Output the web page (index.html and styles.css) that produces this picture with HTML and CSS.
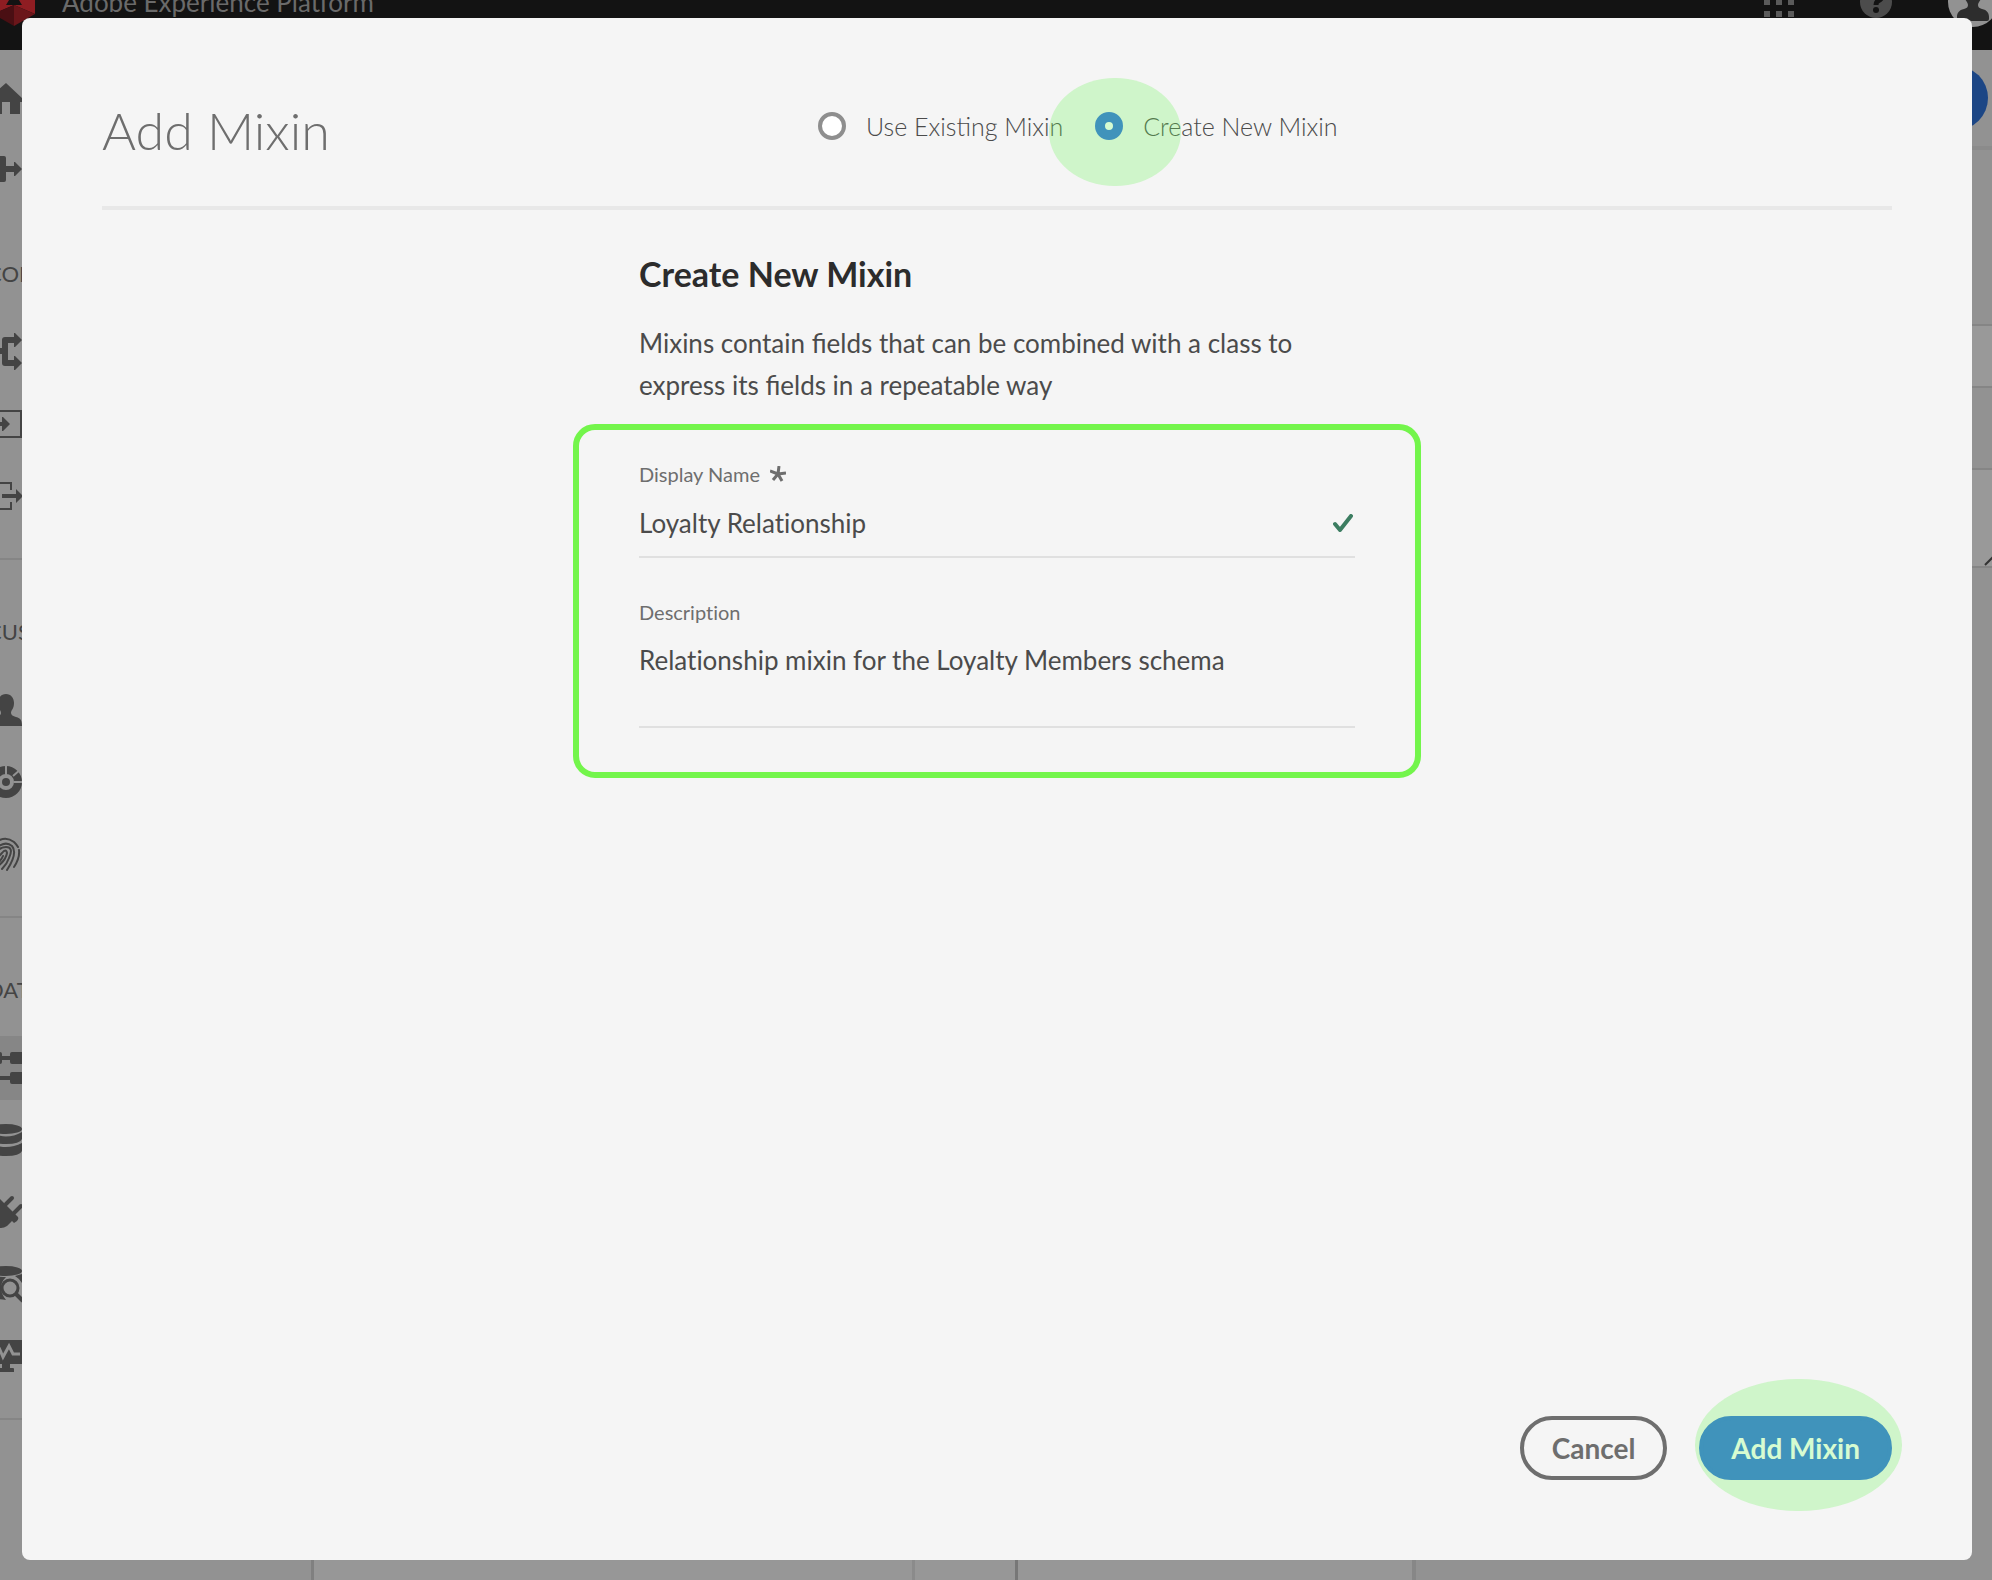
FILE: index.html
```html
<!DOCTYPE html>
<html lang="en">
<head>
<meta charset="utf-8">
<title>Add Mixin</title>
<link rel="stylesheet" href="styles.css">
</head>
<body>
<div class="app">
  <header class="topbar">
    <svg class="logo" viewBox="-7 -22 42 48" aria-hidden="true">
      <path d="M14-22 35-9V14L14 5-7 14V-9z" fill="#8f1d22"/>
      <path d="M14-8 22 5H6z" fill="#131313"/>
      <path d="M14 5V26L-7 14z" fill="#4a0f13"/>
      <path d="M14 5V26L35 14z" fill="#6b161a"/>
    </svg>
    <span class="brand">Adobe Experience Platform</span>
    <svg class="switcher" viewBox="0 0 30 30" fill="#5b5b5b" aria-hidden="true">
      <path d="M0 0h6v6H0zM12 0h6v6h-6zM24 0h6v6h-6zM0 12h6v6H0zM12 12h6v6h-6zM24 12h6v6h-6zM0 24h6v6H0zM12 24h6v6h-6zM24 24h6v6h-6z"/>
    </svg>
    <svg class="help" viewBox="-16 -16 32 32" aria-hidden="true">
      <circle r="16" fill="#4c4c4c"/>
      <path d="M-5-6Q-4-10 0-10 6-10 6-6 6-3 2-1 0 0 0 3" fill="none" stroke="#131313" stroke-width="5"/>
      <circle cy="8" r="3" fill="#131313"/>
    </svg>
    <svg class="avatar" viewBox="-25 -25 50 50" aria-hidden="true">
      <circle r="25" fill="#929292"/>
      <path d="M0-18c6 0 9 5 9 10 0 6-4 8-4 11 0 2 1 3 4 4 5 1 7 4 7 8v2q0 2-2 2h-28q-2 0-2-2v-2c0-4 2-7 7-8 3-1 4-2 4-4 0-3-4-5-4-11 0-5 3-10 9-10z" fill="#2d2d2d"/>
    </svg>
  </header>

  <div class="workspace">
    <nav class="sidebar">
      <div class="nav-group nav-group-first">
        <div class="nav-item"><svg class="nav-icon" viewBox="-14 -20 40 40"><path d="M6-15 23 1v3H20V16H10V4H2V16H-8V4H-12V1z"/></svg></div>
        <div class="nav-item"><svg class="nav-icon" viewBox="-14 -20 40 40"><path d="M-12-14H4q2 0 2 2v8h8v-4h1l7 7-7 7h-1V2H6v8q0 2-2 2H-12z"/></svg></div>
      </div>
      <div class="nav-group">
        <div class="nav-label">CON</div>
        <div class="nav-item"><svg class="nav-icon" viewBox="-14 -20 40 40"><path d="M-14-4H2V-12q0-3 3-3h9v-4h1l7 7-7 7h-1V-9H8V8h6V4h1l7 7-7 7h-1V14H5q-3 0-3-3V2H-14z"/></svg></div>
        <div class="nav-item"><svg class="nav-icon" viewBox="-14 -20 40 40"><path d="M-14-13H21V13H-14" fill="none" stroke="#444" stroke-width="2"/><path d="M-14-2H2v-5h1l7 7-7 7H2V2H-14z"/></svg></div>
        <div class="nav-item"><svg class="nav-icon" viewBox="-14 -20 40 40"><path d="M11-6V-13H-12V13H11V6" fill="none" stroke="#444" stroke-width="2"/><path d="M2-2H16v-5l7 7-7 7V2H2z"/></svg></div>
      </div>
      <div class="nav-group">
        <div class="nav-label">CUS</div>
        <div class="nav-item"><svg class="nav-icon" viewBox="-14 -20 40 40"><path d="M6-16c5 0 8 4 8 9 0 6-3 7-3 10 0 2 2 3 5 4 5 1 6 4 6 9h-32c0-5 1-8 6-9 3-1 5-2 5-4 0-3-3-4-3-10 0-5 3-9 8-9z"/></svg></div>
        <div class="nav-item"><svg class="nav-icon" viewBox="-14 -20 40 40"><circle cx="6" r="12" fill="none" stroke="#444" stroke-width="8"/><circle cx="6" r="4"/><path d="M6-17V-7M13-6 21-13M14 0H23M-1 6-8 13M-1-4-10-8" stroke="#929292" stroke-width="2"/></svg></div>
        <div class="nav-item"><svg class="nav-icon" viewBox="-14 -20 40 40"><g fill="none" stroke="#444" stroke-width="2" stroke-linecap="round"><path d="M-5-11Q5-19 14-12 17-9 18-7M19-4Q20 4 14 13M-5-5Q5-14 12-8 18-1 7 16M-4 0Q-1-7 6-7 14-7 9 4 7 10 2 15M-7 9Q0 1 2-1 6-6 7-1 6 6-3 13M3 2Q1 7-5 12"/></g></svg></div>
      </div>
      <div class="nav-group">
        <div class="nav-label">DAT</div>
        <div class="nav-item nav-item-active"><svg class="nav-icon" viewBox="-14 -20 40 40"><path d="M-10-16H0q2 0 2 2v2h8v-2q0-2 2-2H22V-4H12q-2 0-2-2V-8H2v2q0 2-2 2H-10zM-10 8H10V6q0-2 2-2H22V16H12q-2 0-2-2V12H-10z"/></svg></div>
        <div class="nav-item"><svg class="nav-icon" viewBox="-14 -20 40 40"><ellipse cx="6" cy="-11" rx="16" ry="5"/><path d="M-10-8Q6 1 22-8V-1Q20 4 6 4-8 4-10-1zM-10 3Q6 11 22 3V11Q20 16 6 16-8 16-10 11z"/></svg></div>
        <div class="nav-item"><svg class="nav-icon" viewBox="-14 -20 40 40"><path d="M0-13 18 5Q19 7 17 9L14 11 12 9 7 14Q1 18-5 14L-9 18H-14V12L-9 6Q-12-1-7-6z"/><path d="M6-8 12-14M14 1 21-6" stroke="#444" stroke-width="4" stroke-linecap="round"/></svg></div>
        <div class="nav-item"><svg class="nav-icon" viewBox="-14 -20 40 40"><ellipse cx="6" cy="-13" rx="16" ry="5"/><path d="M-10-9Q-4-7 6-7-4 3 6 16-8 15-10 11zM15-8 22-10V-1Q20-5 15-8z"/><circle cx="10" cy="4" r="8" fill="none" stroke="#444" stroke-width="3"/><path d="M15 9 23 17" stroke="#444" stroke-width="4"/></svg></div>
        <div class="nav-item"><svg class="nav-icon" viewBox="-14 -20 40 40"><path d="M-10-16H22V8H10V12H13Q14 12 14 13V16H-3V12H2V8H-10z"/><path d="M-10-2H-3L0-6 3 1 9-10 13-2H20" fill="none" stroke="#929292" stroke-width="3"/></svg></div>
      </div>
    </nav>
    <main class="content">
      <div class="toolbar"><span class="toolbar-action"></span></div>
      <div class="panes">
        <div class="pane pane-tree"></div>
        <div class="pane pane-gutter"></div>
        <div class="pane pane-canvas"></div>
        <div class="pane-rail">
          <div class="rail-field rail-field-short"></div>
          <div class="rail-field rail-field-tall">
            <svg class="grip" viewBox="0 0 14 14" aria-hidden="true"><path d="M1 13 13 1" stroke="#333" stroke-width="2"/></svg>
          </div>
        </div>
      </div>
    </main>
  </div>
</div>

<div class="overlay">
  <form class="dialog" role="dialog" aria-labelledby="dialog-title">
    <div class="dialog-header">
      <h1 class="dialog-title" id="dialog-title">Add Mixin</h1>
      <div class="options">
        <label class="option"><input class="radio" type="radio" name="source"><span>Use Existing Mixin</span></label>
        <label class="option option-spot"><input class="radio" type="radio" name="source" checked><span>Create New Mixin</span></label>
      </div>
    </div>
    <div class="dialog-body">
      <h2 class="section-title">Create New Mixin</h2>
      <p class="intro">Mixins contain fields that can be combined with a class to express its fields in a repeatable way</p>
      <div class="fields">
        <label class="field-label" for="name">Display Name
          <svg class="required" viewBox="-8 -8 16 16" aria-hidden="true"><path d="M0 0 1-8M0 0 8-1M0 0 4 7M0 0-5 6M0 0-8-3" stroke="#6e6e6e" stroke-width="3"/></svg>
        </label>
        <div class="control">
          <input class="text-input" id="name" type="text" value="Loyalty Relationship">
          <svg class="valid" viewBox="0 0 20 18" aria-hidden="true"><path d="M2 10 7 16 18 2" fill="none" stroke="#3c7d61" stroke-width="4" stroke-linecap="round" stroke-linejoin="round"/></svg>
        </div>
        <label class="field-label" for="description">Description</label>
        <textarea class="text-area" id="description">Relationship mixin for the Loyalty Members schema</textarea>
      </div>
    </div>
    <div class="dialog-footer">
      <button class="button button-secondary" type="button">Cancel</button>
      <button class="button button-primary" type="button">Add Mixin</button>
    </div>
  </form>
</div>
</body>
</html>
```

FILE: styles.css
```css
* { box-sizing: border-box; }

body {
  margin: 0;
  height: 100vh;
  overflow: hidden;
  background: #929292;
  color: #4b4b4b;
  font-family: Lato, "Open Sans", sans-serif;
}

/* Dimmed application behind the dialog */
.app {
  display: flex;
  flex-direction: column;
  height: 100vh;
  overflow: hidden;
}

.topbar {
  display: flex;
  flex: none;
  align-items: center;
  height: 96px;
  margin: -46px -6px 0 -7px;
  background: #131313;
}
.logo { width: 42px; height: 48px; }
.brand {
  margin-left: 27px;
  color: #6a6a6a;
  font-size: 26px;
  line-height: 32px;
}
.switcher { width: 30px; height: 30px; margin-left: auto; }
.help { width: 32px; height: 32px; margin-left: 66px; }
.avatar { width: 50px; height: 50px; margin-left: 56px; }

.workspace { display: flex; flex: 1; min-height: 0; }

.sidebar {
  flex: none;
  width: 314px;
  padding-top: 16px;
  border-right: 3px solid #808080;
}
.nav-group { padding-bottom: 30px; border-bottom: 2px solid #858585; }
.nav-group-first { padding-bottom: 0; border-bottom: 0; }
.nav-label {
  margin-left: -13px;
  padding: 58px 0 32px;
  color: #444;
  font-size: 22px;
  line-height: 28px;
}
.nav-item { display: flex; align-items: center; height: 64px; }
.nav-item + .nav-item { margin-top: 8px; }
.nav-item-active { background: #868686; }
.nav-icon { width: 40px; height: 40px; margin-left: -14px; fill: #444; }

.content { display: flex; flex: 1; flex-direction: column; }
.toolbar {
  display: flex;
  justify-content: flex-end;
  height: 100px;
  padding: 16px 4px;
  border-bottom: 4px solid #8b8b8b;
}
.toolbar-action {
  width: 120px;
  height: 64px;
  border-radius: 32px;
  background: #1c4685;
}
.panes { display: flex; flex: 1; }
.pane { background: #979797; }
.pane-tree { flex: 600; border-right: 3px solid #8b8b8b; }
.pane-gutter { flex: 101; border-right: 3px solid #777; }
.pane-canvas { flex: 396; border-right: 4px solid #878787; }
.pane-rail { flex: 578; padding-top: 174px; }
.rail-field {
  border-top: 2px solid #858585;
  border-bottom: 2px solid #858585;
  background: #999;
}
.rail-field-short { height: 64px; }
.rail-field-tall {
  display: flex;
  align-items: flex-end;
  justify-content: flex-end;
  height: 100px;
  margin-top: 80px;
}
.grip { width: 14px; height: 14px; margin-right: -6px; }

/* Dialog */
.overlay {
  position: fixed;
  inset: 0;
  display: flex;
  padding: 18px 20px 20px 22px;
}
.dialog {
  display: flex;
  flex: 1;
  flex-direction: column;
  padding: 64px 80px 80px;
  border-radius: 8px;
  background: #f5f5f5;
}
.dialog-header {
  display: grid;
  grid-template-columns: 2fr 3fr;
  height: 128px;
  border-bottom: 4px solid #e8e8e8;
}
.dialog-title {
  margin: 16px 0 0;
  color: #6e6e6e;
  font-size: 52px;
  font-weight: 300;
  line-height: 64px;
}
.options {
  display: flex;
  align-items: center;
  gap: 32px;
  height: 88px;
}
.option {
  position: relative;
  display: flex;
  align-items: center;
  gap: 20px;
  font-size: 25px;
  font-weight: 300;
  line-height: 32px;
  white-space: nowrap;
}
.radio {
  appearance: none;
  width: 28px;
  height: 28px;
  margin: 0;
  border: 4px solid #8e8e8e;
  border-radius: 50%;
  background: #fff;
}
.radio:checked { border: 10px solid #306ee1; }

/* Translucent green spots that call out a control */
.option-spot::after,
.button-primary::after {
  content: "";
  position: absolute;
  border-radius: 50%;
  background: rgba(108, 245, 88, .28);
  pointer-events: none;
}
.option-spot::after { left: -46px; top: -32px; width: 132px; height: 108px; }

.dialog-body { flex: 1; width: 40%; margin: 0 auto; }
.section-title {
  margin: 42px 0 0;
  color: #2c2c2c;
  font-size: 34px;
  font-weight: 700;
  line-height: 44px;
}
.intro {
  margin: 26px 0 0;
  font-size: 26px;
  line-height: 42px;
}
.fields {
  margin: 18px -66px 0;
  padding: 32px 60px 44px;
  border: 6px solid #73f54b;
  border-radius: 22px;
  font-variant-ligatures: none;
}
.field-label {
  display: flex;
  align-items: center;
  gap: 10px;
  color: #6e6e6e;
  font-size: 20px;
  line-height: 24px;
}
.required { width: 16px; height: 16px; }
.control {
  display: flex;
  align-items: center;
  height: 72px;
  margin-bottom: 42px;
  padding-top: 4px;
  border-bottom: 2px solid #e0e0e0;
}
.text-input,
.text-area {
  display: block;
  padding: 0;
  border: 0;
  border-radius: 0;
  outline: 0;
  background: transparent;
  color: #4b4b4b;
  font: inherit;
  font-size: 26px;
  font-variant-ligatures: none;
  line-height: 32px;
}
.text-input { flex: 1; }
.valid { width: 20px; height: 18px; margin-right: 2px; }
.text-area {
  width: 100%;
  height: 104px;
  padding-top: 20px;
  border-bottom: 2px solid #e0e0e0;
  resize: none;
  overflow: hidden;
}

.dialog-footer { display: flex; justify-content: flex-end; gap: 32px; }
.button {
  position: relative;
  height: 64px;
  padding: 0 28px;
  border: 4px solid #6e6e6e;
  border-radius: 32px;
  background: transparent;
  color: #6e6e6e;
  font: inherit;
  font-size: 28px;
  font-weight: 700;
}
.button-primary { border-color: #306ee1; background: #306ee1; color: #fff; }
.button-primary::after { left: -8px; top: -41px; width: 207px; height: 132px; }
```
